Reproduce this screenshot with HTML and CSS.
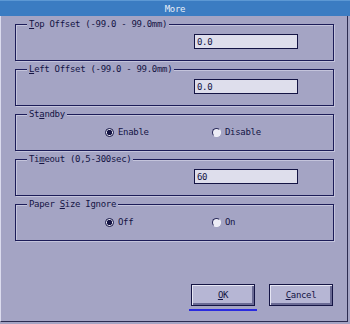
FILE: index.html
```html
<!DOCTYPE html>
<html lang="en">
<head>
  <meta charset="UTF-8" />
  <title>More</title>
  <link rel="stylesheet" href="styles.css">
</head>
<body>
  <div class="titlebar">More</div>
  <div class="frame">

    <!-- offsets -->
    <div class="group">
      <div class="legend"><u>T</u>op Offset (-99.0 - 99.0mm)</div>
      <div class="field-row"><input class="field" type="text" value="0.0"></div>
    </div>

    <div class="group">
      <div class="legend"><u>L</u>eft Offset (-99.0 - 99.0mm)</div>
      <div class="field-row"><input class="field" type="text" value="0.0"></div>
    </div>

    <!-- standby -->
    <div class="group">
      <div class="legend">St<u>a</u>ndby</div>
      <div class="radio-row">
        <span class="radio"><span class="dot checked"></span>Enable</span>
        <span class="radio"><span class="dot"></span>Disable</span>
      </div>
    </div>

    <div class="group">
      <div class="legend">Ti<u>m</u>eout (0,5-300sec)</div>
      <div class="field-row"><input class="field" type="text" value="60"></div>
    </div>

    <div class="group">
      <div class="legend">Paper <u>S</u>ize Ignore</div>
      <div class="radio-row">
        <span class="radio"><span class="dot checked"></span>Off</span>
        <span class="radio"><span class="dot"></span>On</span>
      </div>
    </div>

    <!-- buttons -->
    <div class="buttons">
      <span class="focus"><button class="btn"><u>O</u>K</button></span>
      <button class="btn"><u>C</u>ancel</button>
    </div>
  </div>
</body>
</html>
```

FILE: styles.css
```css
body {
  margin: 0;
  width: 350px;
  height: 324px;
  background: #a4a4c4;
  color: #141444;
  font-family: "DejaVu Sans Mono", "Liberation Mono", monospace;
  font-size: 9px;
  letter-spacing: -0.3px;
  overflow: hidden;
}
u {
  text-decoration: underline;
  text-underline-offset: 1px;
}
.titlebar {
  height: 16px;
  line-height: 16px;
  background: #3b7cc2;
  border-top: 1px solid #5c98d4;
  box-sizing: border-box;
  color: #e8eef8;
  text-align: center;
}
.frame {
  width: 348px;
  height: 306px;
  box-sizing: border-box;
  border-left: 1px solid #dcdcee;
  border-right: 1px solid #2c2c50;
  border-bottom: 1px solid #2c2c50;
  padding: 8px 0 0 14px;
}
.group {
  width: 319px;
  height: 37px;
  box-sizing: border-box;
  border: 1px solid #1c1c58;
  box-shadow: inset 1px 1px 0 #c4c4dc, 1px 1px 0 #c4c4dc;
  margin-bottom: 8px;
}
.legend {
  width: fit-content;
  margin: -6px 0 0 11px;
  padding: 0 2px;
  line-height: 11px;
  background: #a4a4c4;
}
.field-row {
  padding-left: 178px;
  margin-top: 4px;
}
.field {
  display: block;
  width: 104px;
  height: 15px;
  box-sizing: border-box;
  margin: 0;
  padding: 0 0 0 2px;
  border: 1px solid #141444;
  background: #dedeec;
  color: #141444;
  font-family: "DejaVu Sans Mono", "Liberation Mono", monospace;
  font-size: 9px;
  letter-spacing: -0.3px;
  outline: none;
}
.radio-row {
  display: flex;
  padding-left: 89px;
  margin-top: 7px;
  line-height: 11px;
}
.radio {
  display: flex;
  align-items: center;
  width: 107px;
}
.dot {
  width: 9px;
  height: 9px;
  box-sizing: border-box;
  border-radius: 50%;
  border: 1px solid #2a2a5a;
  border-right-color: #f0f0f8;
  border-bottom-color: #f0f0f8;
  background: #ececf6;
  margin-right: 4px;
}
.dot.checked {
  border-color: #141444;
  background: radial-gradient(circle, #141444 0 2.5px, #ececf6 3px);
}
.buttons {
  display: flex;
  justify-content: flex-end;
  align-items: flex-start;
  gap: 12px;
  padding-right: 14px;
  margin-top: 43px;
}
.focus {
  padding: 0 2px 3px;
  border-bottom: 2px solid #2a2ae0;
}
.btn {
  display: block;
  width: 64px;
  height: 22px;
  box-sizing: border-box;
  margin: 0;
  padding: 0;
  border: 1px solid #141444;
  background: #b6b6d4;
  box-shadow: inset 1px 1px 0 #e6e6f4, inset -2px -2px 0 #6a6a94;
  color: #141444;
  font-family: "DejaVu Sans Mono", "Liberation Mono", monospace;
  font-size: 9px;
  letter-spacing: -0.3px;
}
```
